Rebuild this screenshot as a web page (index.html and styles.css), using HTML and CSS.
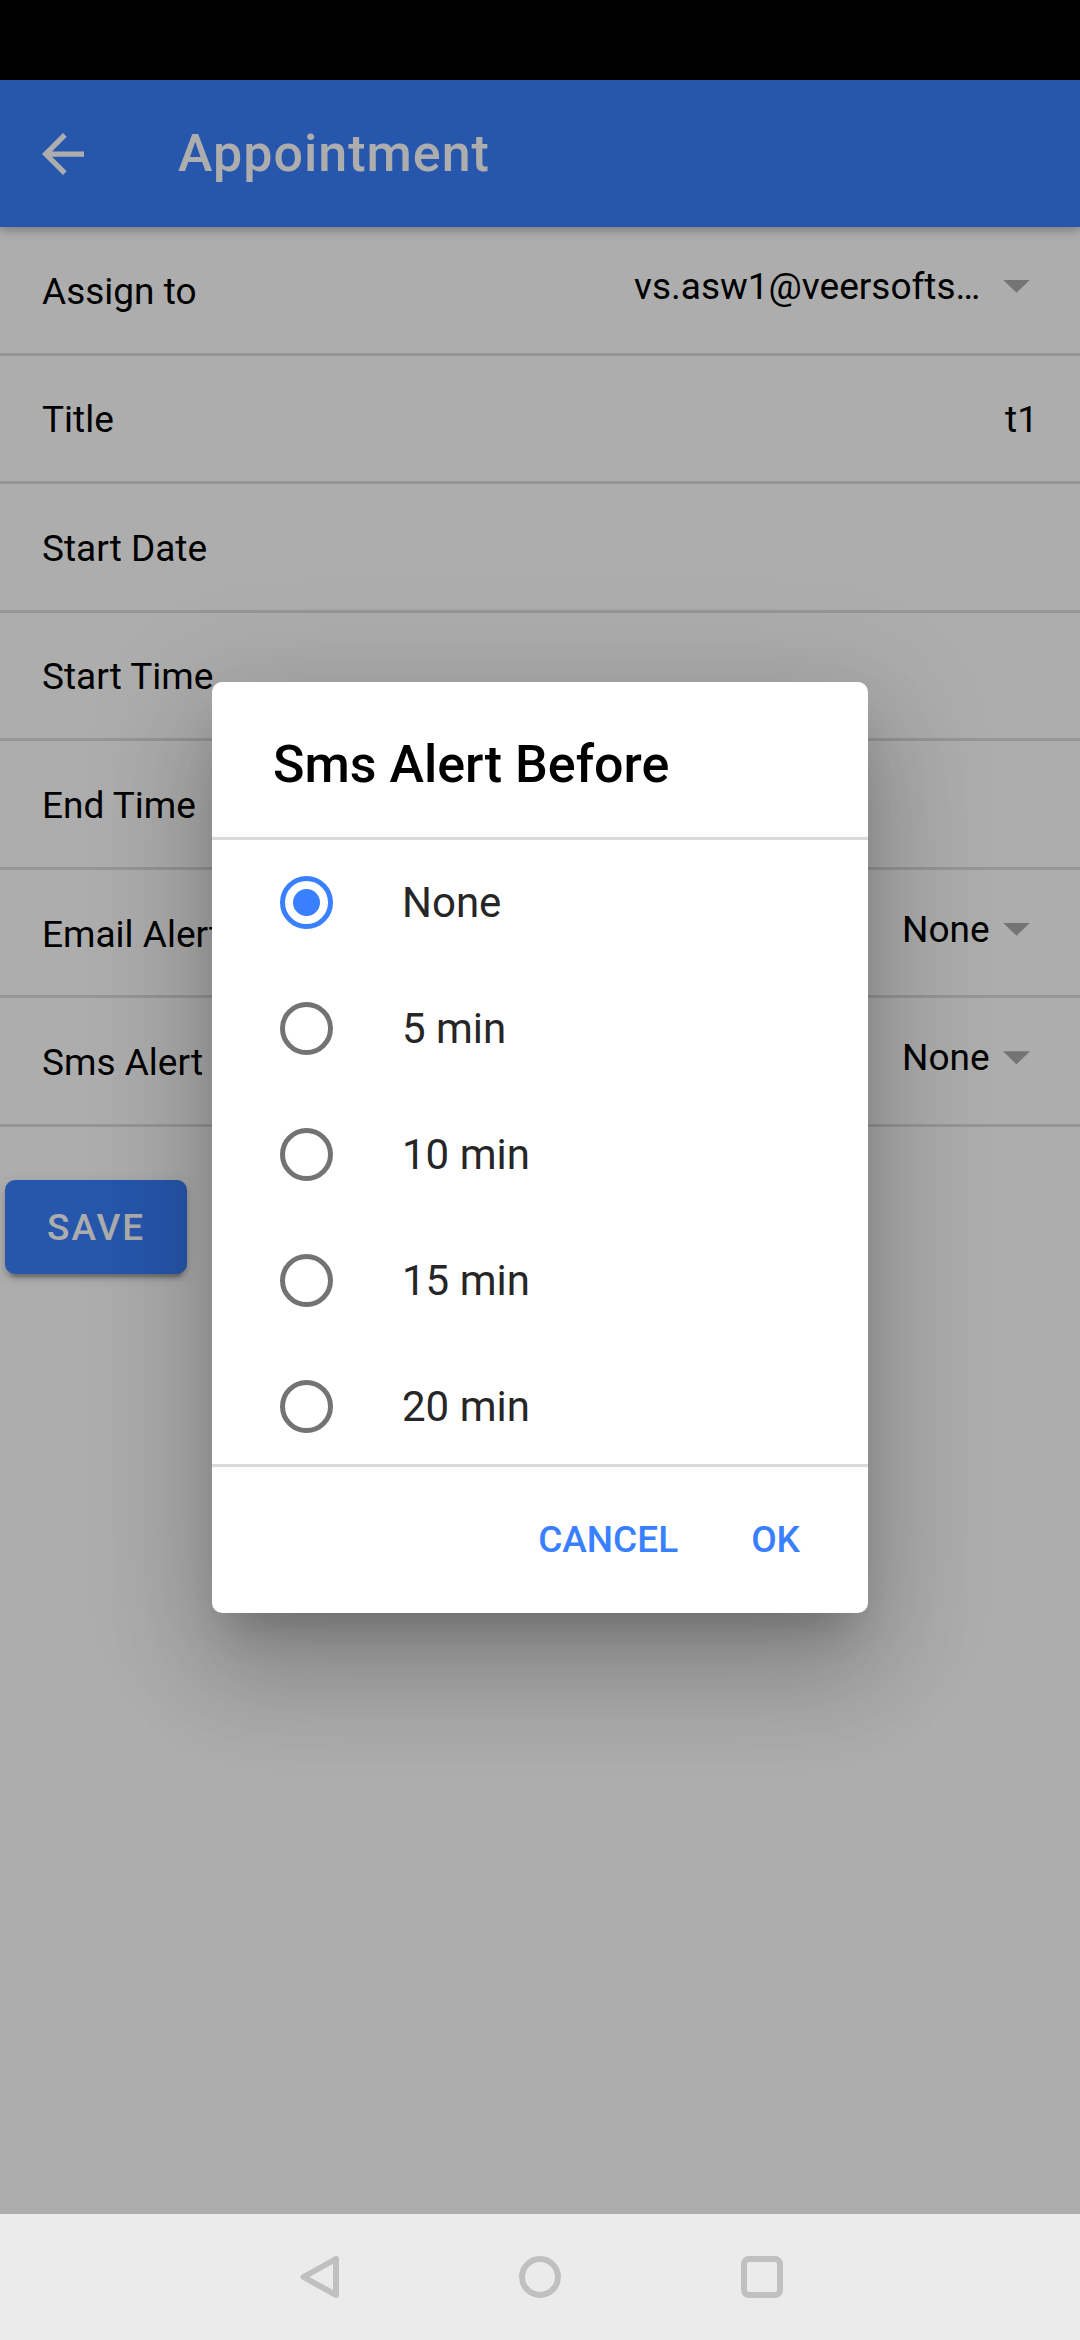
FILE: index.html
```html
<!DOCTYPE html>
<html lang="en">
<head>
<meta charset="utf-8">
<meta name="viewport" content="width=device-width, initial-scale=1">
<title>Appointment</title>
<link rel="stylesheet" href="styles.css">
</head>
<body>
<div class="status-bar"></div>
<div class="app">
  <header class="toolbar">
    <button class="back" type="button" aria-label="Back">
      <svg viewBox="4 4 16 16" aria-hidden="true"><path d="M20 11H7.83l5.59-5.59L12 4l-8 8 8 8 1.41-1.41L7.83 13H20v-2z"/></svg>
    </button>
    <h1 class="toolbar-title">Appointment</h1>
  </header>
  <main>
    <form class="form">
      <div class="rows">
        <div class="row">
          <label for="assign">Assign to</label>
          <span class="picker">
            <select class="assign" id="assign"><option>vs.asw1@veersofts…</option></select>
          </span>
        </div>
        <div class="row">
          <label for="title">Title</label>
          <input id="title" type="text" value="t1">
        </div>
        <div class="row">
          <label for="start-date">Start Date</label>
          <input id="start-date" type="text">
        </div>
        <div class="row">
          <label for="start-time">Start Time</label>
          <input id="start-time" type="text">
        </div>
        <div class="row">
          <label for="end-time">End Time</label>
          <input id="end-time" type="text">
        </div>
        <div class="row">
          <label for="email-alert">Email Alert Before</label>
          <span class="picker">
            <select id="email-alert"><option>None</option></select>
          </span>
        </div>
        <div class="row">
          <label for="sms-alert">Sms Alert Before</label>
          <span class="picker">
            <select id="sms-alert"><option>None</option></select>
          </span>
        </div>
      </div>
      <button class="save" type="button">SAVE</button>
    </form>
  </main>
  <div class="backdrop">
    <form class="dialog" role="dialog" aria-labelledby="dialog-title">
      <h2 class="dialog-title" id="dialog-title">Sms Alert Before</h2>
      <div class="options">
        <label class="option"><input type="radio" name="sms" checked>None</label>
        <label class="option"><input type="radio" name="sms">5 min</label>
        <label class="option"><input type="radio" name="sms">10 min</label>
        <label class="option"><input type="radio" name="sms">15 min</label>
        <label class="option"><input type="radio" name="sms">20 min</label>
      </div>
      <div class="actions">
        <button type="button">CANCEL</button>
        <button type="button">OK</button>
      </div>
    </form>
  </div>
</div>
<nav class="nav-bar">
  <button type="button" aria-label="Back"><svg viewBox="0 0 42 42" aria-hidden="true"><path d="M39 3v36L6.500 21z"/></svg></button>
  <button type="button" aria-label="Home"><svg viewBox="0 0 42 42" aria-hidden="true"><circle cx="21" cy="21" r="18"/></svg></button>
  <button type="button" aria-label="Recent apps"><svg viewBox="0 0 42 42" aria-hidden="true"><rect x="3" y="3" width="36" height="36" rx="5"/></svg></button>
</nav>
</body>
</html>
```
FILE: styles.css
```css
* {
  box-sizing: border-box;
}

body {
  display: flex;
  flex-direction: column;
  min-height: 100vh;
  margin: 0;
  background: #fff;
  color: #000;
  font-family: Roboto, "Noto Sans", sans-serif;
  font-size: 37px;
}

button,
input,
select {
  margin: 0;
  padding: 0;
  border: 0;
  background: none;
  color: inherit;
  font: inherit;
}

.status-bar {
  height: 80px;
  background: #000;
}

.app {
  position: relative;
  flex: 1;
  overflow: hidden;
}

/* Toolbar */
.toolbar {
  position: relative;
  display: flex;
  align-items: center;
  gap: 94px;
  height: 147px;
  padding: 0 42px;
  background: #3880ff;
  color: #fff;
  box-shadow: 0 3px 10px rgba(0, 0, 0, 0.3);
}

.back svg {
  display: block;
  width: 42px;
  height: 42px;
  fill: currentColor;
}

.toolbar-title {
  margin: 0;
  font-size: 52px;
  font-weight: 500;
  letter-spacing: 1px;
}

/* Form rows */
.rows {
  display: grid;
  grid-auto-rows: 1fr;
  min-height: 900px;
}

.row {
  display: flex;
  align-items: center;
  justify-content: space-between;
  padding: 3px 42px 0;
  border-bottom: 3px solid #dedede;
}

.row input {
  flex: 1;
  min-width: 0;
  text-align: right;
}

.picker {
  display: flex;
  align-items: center;
  gap: 13px;
  padding: 0 8px 10px 0;
}

.picker::after {
  content: "";
  width: 27px;
  height: 13px;
  background: #ababab;
  clip-path: polygon(0 0, 100% 0, 50% 100%);
}

.picker select {
  appearance: none;
}

.picker .assign {
  width: 356px;
}

.save {
  margin: 53px 5px;
  padding: 0 42px;
  height: 94px;
  border-radius: 10px;
  background: #3880ff;
  color: #fff;
  font-weight: 500;
  letter-spacing: 2px;
  box-shadow:
    0 8px 3px -5px rgba(0, 0, 0, 0.2),
    0 5px 5px rgba(0, 0, 0, 0.14),
    0 3px 13px rgba(0, 0, 0, 0.12);
}

/* Dialog */
.backdrop {
  position: absolute;
  inset: 0;
  display: flex;
  align-items: center;
  justify-content: center;
  background: rgba(0, 0, 0, 0.32);
}

.dialog {
  width: 656px;
  max-width: 90%;
  border-radius: 10px;
  background: #fff;
  box-shadow:
    0 29px 39px -18px rgba(0, 0, 0, 0.2),
    0 63px 100px 8px rgba(0, 0, 0, 0.14),
    0 24px 121px 21px rgba(0, 0, 0, 0.12);
}

.dialog-title {
  margin: 0;
  padding: 53px 61px 42px;
  font-size: 52px;
  font-weight: 500;
  line-height: 60px;
}

.options {
  height: 630px;
  overflow: hidden;
  border: solid #d9d9d9;
  border-width: 3px 0;
}

.option {
  display: flex;
  align-items: center;
  gap: 69px;
  height: 126px;
  padding: 0 68px;
  color: #262626;
  font-size: 42px;
}

.option input {
  appearance: none;
  display: grid;
  place-items: center;
  width: 53px;
  height: 53px;
  border: 5px solid #737373;
  border-radius: 50%;
}

.option input:checked {
  border-color: #3880ff;
}

.option input:checked::before {
  content: "";
  width: 27px;
  height: 27px;
  border-radius: 50%;
  background: #3880ff;
}

.actions {
  display: flex;
  align-items: center;
  justify-content: flex-end;
  gap: 21px;
  height: 146px;
  padding: 0 42px;
}

.actions button {
  height: 94px;
  padding: 0 26px;
  color: #3880ff;
  font-weight: 500;
}

/* System navigation */
.nav-bar {
  display: flex;
  align-items: center;
  justify-content: center;
  gap: 180px;
  height: 126px;
  background: #ebebeb;
}

.nav-bar svg {
  display: block;
  width: 42px;
  height: 42px;
  overflow: visible;
  fill: none;
  stroke: #c0c0c0;
  stroke-width: 6px;
  stroke-linejoin: round;
}
```
